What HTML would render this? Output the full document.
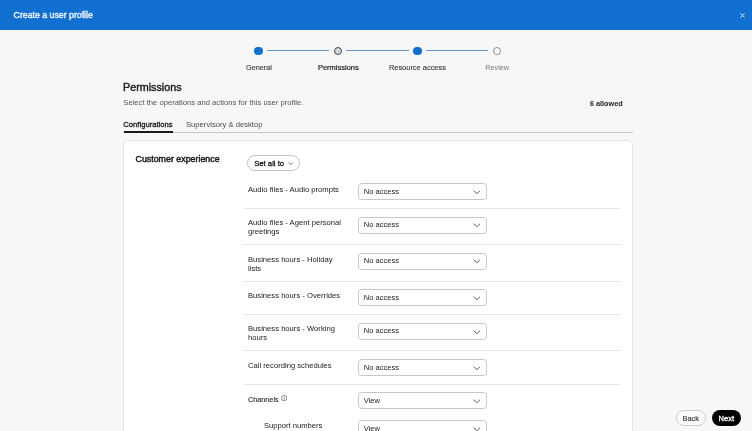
<!DOCTYPE html>
<html><head><meta charset="utf-8"><style>
html,body{margin:0;padding:0;width:752px;height:431px;overflow:hidden;background:#f7f7f7;font-family:"Liberation Sans", sans-serif;}
#root{position:absolute;left:0;top:0;width:752px;height:431px;filter:blur(0.35px);will-change:transform;}
div{font-family:"Liberation Sans", sans-serif;}
</style></head><body><div id="root">
<div style="position:absolute;left:0px;top:0px;width:752px;height:29.6px;background:#1170cf"></div>
<div style="position:absolute;left:13.60px;top:11.26px;font-size:8.75px;line-height:8.75px;font-weight:400;color:#eaf2fc;white-space:nowrap;-webkit-text-stroke:0.4px #eaf2fc">Create a user profile</div>
<svg style="position:absolute;left:740.4px;top:12.5px" width="5" height="5" viewBox="0 0 5 5"><path d="M0.4 0.4L4.6 4.6M4.6 0.4L0.4 4.6" stroke="#e4eefa" stroke-width="1.0" fill="none"/></svg>
<div style="position:absolute;left:267.15px;top:50.2px;width:62.05000000000001px;height:1.3px;background:#6697cc"></div>
<div style="position:absolute;left:346.2px;top:50.2px;width:62.900000000000034px;height:1.3px;background:#6697cc"></div>
<div style="position:absolute;left:426.1px;top:50.2px;width:62.099999999999966px;height:1.3px;background:#6697cc"></div>
<div style="position:absolute;left:254.45px;top:46.65px;width:8.40px;height:8.40px;border-radius:50%;background:#1170cf;box-sizing:border-box;border:none"></div>
<div style="position:absolute;left:333.50px;top:46.65px;width:8.40px;height:8.40px;border-radius:50%;background:#d5d6d9;box-sizing:border-box;border:1.3px solid #414854"></div>
<div style="position:absolute;left:413.40px;top:46.65px;width:8.40px;height:8.40px;border-radius:50%;background:#1170cf;box-sizing:border-box;border:none"></div>
<div style="position:absolute;left:492.50px;top:46.65px;width:8.40px;height:8.40px;border-radius:50%;background:#ffffff;box-sizing:border-box;border:1px solid #8a8a8a"></div>
<div style="position:absolute;left:246.00px;top:63.70px;font-size:7.3px;line-height:7.3px;font-weight:400;color:#333333;white-space:nowrap;-webkit-text-stroke:0.1px #333">General</div>
<div style="position:absolute;left:317.90px;top:63.52px;font-size:7.5px;line-height:7.5px;font-weight:400;color:#222;white-space:nowrap;-webkit-text-stroke:0.2px #222">Permissions</div>
<div style="position:absolute;left:388.90px;top:63.57px;font-size:7.45px;line-height:7.45px;font-weight:400;color:#333333;white-space:nowrap;-webkit-text-stroke:0.1px #333">Resource access</div>
<div style="position:absolute;left:485.20px;top:63.70px;font-size:7.3px;line-height:7.3px;font-weight:400;color:#7a7a7a;white-space:nowrap;">Review</div>
<div style="position:absolute;left:123.00px;top:81.86px;font-size:10.75px;line-height:10.75px;font-weight:400;color:#1a1a1a;white-space:nowrap;-webkit-text-stroke:0.4px #1a1a1a">Permissions</div>
<div style="position:absolute;left:123.30px;top:98.70px;font-size:7.65px;line-height:7.65px;font-weight:400;color:#545454;white-space:nowrap;">Select the operations and actions for this user profile.</div>
<div style="position:absolute;left:590.00px;top:99.54px;font-size:7.25px;line-height:7.25px;font-weight:700;color:#1a1a1a;white-space:nowrap;">6 allowed</div>
<div style="position:absolute;left:123.30px;top:120.50px;font-size:7.65px;line-height:7.65px;font-weight:400;color:#1a1a1a;white-space:nowrap;-webkit-text-stroke:0.3px #1a1a1a">Configurations</div>
<div style="position:absolute;left:186.00px;top:120.60px;font-size:7.65px;line-height:7.65px;font-weight:400;color:#4a4a4a;white-space:nowrap;">Supervisory &amp; desktop</div>
<div style="position:absolute;left:123px;top:132px;width:509.5px;height:0.8px;background:#c8c8c8"></div>
<div style="position:absolute;left:123.5px;top:130.5px;width:49.5px;height:2px;background:#1a1a1a"></div>
<div style="position:absolute;left:123.3px;top:140.3px;width:509.5px;height:400px;background:#fff;border:1px solid #e4e4e4;border-radius:5px;box-sizing:border-box"></div>
<div style="position:absolute;left:135.50px;top:155.28px;font-size:8.85px;line-height:8.85px;font-weight:400;color:#1a1a1a;white-space:nowrap;-webkit-text-stroke:0.45px #1a1a1a">Customer experience</div>
<div style="position:absolute;left:247.3px;top:154.5px;width:52.4px;height:16.9px;border:1px solid #c4c4c4;border-radius:9px;box-sizing:border-box;background:#fff"></div>
<div style="position:absolute;left:254.20px;top:159.66px;font-size:7.7px;line-height:7.7px;font-weight:400;color:#1a1a1a;white-space:nowrap;-webkit-text-stroke:0.3px #1a1a1a">Set all to</div>
<svg style="position:absolute;left:287.8px;top:161.5px" width="5.5" height="3.5" viewBox="0 0 5.5 3.5"><path d="M0.5 0.5L2.75 2.8L5 0.5" stroke="#555" stroke-width="0.8" fill="none"/></svg>
<div style="position:absolute;left:248.00px;top:186.30px;font-size:7.65px;line-height:7.65px;font-weight:400;color:#222222;white-space:nowrap;">Audio files - Audio prompts</div>
<div style="position:absolute;left:357.5px;top:183.2px;width:129.5px;height:17.0px;border:1px solid #c6c6c6;border-radius:3.5px;box-sizing:border-box;background:#fff"></div>
<div style="position:absolute;left:363.80px;top:187.98px;font-size:7.55px;line-height:7.55px;font-weight:400;color:#222222;white-space:nowrap;">No access</div>
<svg style="position:absolute;left:472.6px;top:190.10px" width="7.8" height="4.4" viewBox="0 0 7.8 4.4"><path d="M0.6 0.6L3.9 3.7L7.2 0.6" stroke="#555" stroke-width="0.95" fill="none"/></svg>
<div style="position:absolute;left:244px;top:207.5px;width:376px;height:1px;background:#e6e6e6"></div>
<div style="position:absolute;left:248.00px;top:219.40px;font-size:7.65px;line-height:7.65px;font-weight:400;color:#222222;white-space:nowrap;">Audio files - Agent personal</div>
<div style="position:absolute;left:248.00px;top:228.00px;font-size:7.65px;line-height:7.65px;font-weight:400;color:#222222;white-space:nowrap;">greetings</div>
<div style="position:absolute;left:357.5px;top:216.5px;width:129.5px;height:17.0px;border:1px solid #c6c6c6;border-radius:3.5px;box-sizing:border-box;background:#fff"></div>
<div style="position:absolute;left:363.80px;top:221.28px;font-size:7.55px;line-height:7.55px;font-weight:400;color:#222222;white-space:nowrap;">No access</div>
<svg style="position:absolute;left:472.6px;top:223.40px" width="7.8" height="4.4" viewBox="0 0 7.8 4.4"><path d="M0.6 0.6L3.9 3.7L7.2 0.6" stroke="#555" stroke-width="0.95" fill="none"/></svg>
<div style="position:absolute;left:244px;top:243.5px;width:376px;height:1px;background:#e6e6e6"></div>
<div style="position:absolute;left:248.00px;top:255.90px;font-size:7.65px;line-height:7.65px;font-weight:400;color:#222222;white-space:nowrap;">Business hours - Holiday</div>
<div style="position:absolute;left:248.00px;top:264.50px;font-size:7.65px;line-height:7.65px;font-weight:400;color:#222222;white-space:nowrap;">lists</div>
<div style="position:absolute;left:357.5px;top:252.5px;width:129.5px;height:17.0px;border:1px solid #c6c6c6;border-radius:3.5px;box-sizing:border-box;background:#fff"></div>
<div style="position:absolute;left:363.80px;top:257.28px;font-size:7.55px;line-height:7.55px;font-weight:400;color:#222222;white-space:nowrap;">No access</div>
<svg style="position:absolute;left:472.6px;top:259.40px" width="7.8" height="4.4" viewBox="0 0 7.8 4.4"><path d="M0.6 0.6L3.9 3.7L7.2 0.6" stroke="#555" stroke-width="0.95" fill="none"/></svg>
<div style="position:absolute;left:244px;top:281.0px;width:376px;height:1px;background:#e6e6e6"></div>
<div style="position:absolute;left:248.00px;top:292.10px;font-size:7.65px;line-height:7.65px;font-weight:400;color:#222222;white-space:nowrap;">Business hours - Overrides</div>
<div style="position:absolute;left:357.5px;top:289.09999999999997px;width:129.5px;height:17.0px;border:1px solid #c6c6c6;border-radius:3.5px;box-sizing:border-box;background:#fff"></div>
<div style="position:absolute;left:363.80px;top:293.88px;font-size:7.55px;line-height:7.55px;font-weight:400;color:#222222;white-space:nowrap;">No access</div>
<svg style="position:absolute;left:472.6px;top:296.00px" width="7.8" height="4.4" viewBox="0 0 7.8 4.4"><path d="M0.6 0.6L3.9 3.7L7.2 0.6" stroke="#555" stroke-width="0.95" fill="none"/></svg>
<div style="position:absolute;left:244px;top:314.0px;width:376px;height:1px;background:#e6e6e6"></div>
<div style="position:absolute;left:248.00px;top:325.30px;font-size:7.65px;line-height:7.65px;font-weight:400;color:#222222;white-space:nowrap;">Business hours - Working</div>
<div style="position:absolute;left:248.00px;top:333.90px;font-size:7.65px;line-height:7.65px;font-weight:400;color:#222222;white-space:nowrap;">hours</div>
<div style="position:absolute;left:357.5px;top:322.7px;width:129.5px;height:17.0px;border:1px solid #c6c6c6;border-radius:3.5px;box-sizing:border-box;background:#fff"></div>
<div style="position:absolute;left:363.80px;top:327.48px;font-size:7.55px;line-height:7.55px;font-weight:400;color:#222222;white-space:nowrap;">No access</div>
<svg style="position:absolute;left:472.6px;top:329.60px" width="7.8" height="4.4" viewBox="0 0 7.8 4.4"><path d="M0.6 0.6L3.9 3.7L7.2 0.6" stroke="#555" stroke-width="0.95" fill="none"/></svg>
<div style="position:absolute;left:244px;top:349.5px;width:376px;height:1px;background:#e6e6e6"></div>
<div style="position:absolute;left:248.00px;top:361.60px;font-size:7.65px;line-height:7.65px;font-weight:400;color:#222222;white-space:nowrap;">Call recording schedules</div>
<div style="position:absolute;left:357.5px;top:359.09999999999997px;width:129.5px;height:17.0px;border:1px solid #c6c6c6;border-radius:3.5px;box-sizing:border-box;background:#fff"></div>
<div style="position:absolute;left:363.80px;top:363.88px;font-size:7.55px;line-height:7.55px;font-weight:400;color:#222222;white-space:nowrap;">No access</div>
<svg style="position:absolute;left:472.6px;top:366.00px" width="7.8" height="4.4" viewBox="0 0 7.8 4.4"><path d="M0.6 0.6L3.9 3.7L7.2 0.6" stroke="#555" stroke-width="0.95" fill="none"/></svg>
<div style="position:absolute;left:244px;top:383.8px;width:376px;height:1px;background:#e6e6e6"></div>
<div style="position:absolute;left:248.00px;top:395.54px;font-size:7.25px;line-height:7.25px;font-weight:400;color:#1f1f1f;white-space:nowrap;-webkit-text-stroke:0.1px #1f1f1f">Channels</div>
<svg style="position:absolute;left:281.0px;top:394.7px" width="6.4" height="6.4" viewBox="0 0 6.4 6.4"><circle cx="3.2" cy="3.2" r="2.7" stroke="#555" stroke-width="0.7" fill="none"/><path d="M3.2 2.7V4.7" stroke="#555" stroke-width="0.7"/><circle cx="3.2" cy="1.8" r="0.4" fill="#555"/></svg>
<div style="position:absolute;left:357.5px;top:392.09999999999997px;width:129.5px;height:17.0px;border:1px solid #c6c6c6;border-radius:3.5px;box-sizing:border-box;background:#fff"></div>
<div style="position:absolute;left:363.80px;top:396.88px;font-size:7.55px;line-height:7.55px;font-weight:400;color:#222222;white-space:nowrap;">View</div>
<svg style="position:absolute;left:472.6px;top:399.00px" width="7.8" height="4.4" viewBox="0 0 7.8 4.4"><path d="M0.6 0.6L3.9 3.7L7.2 0.6" stroke="#555" stroke-width="0.95" fill="none"/></svg>
<div style="position:absolute;left:264.00px;top:421.74px;font-size:7.6px;line-height:7.6px;font-weight:400;color:#1a1a1a;white-space:nowrap;">Support numbers</div>
<div style="position:absolute;left:357.5px;top:420.0px;width:129.5px;height:17.0px;border:1px solid #c6c6c6;border-radius:3.5px;box-sizing:border-box;background:#fff"></div>
<div style="position:absolute;left:363.80px;top:424.78px;font-size:7.55px;line-height:7.55px;font-weight:400;color:#222222;white-space:nowrap;">View</div>
<svg style="position:absolute;left:472.6px;top:426.90px" width="7.8" height="4.4" viewBox="0 0 7.8 4.4"><path d="M0.6 0.6L3.9 3.7L7.2 0.6" stroke="#555" stroke-width="0.95" fill="none"/></svg>
<div style="position:absolute;left:676.3px;top:409.8px;width:30px;height:15.8px;border:1px solid #cdcdcd;border-radius:8px;box-sizing:border-box;background:#fbfbfb"></div>
<div style="position:absolute;left:682.60px;top:415.35px;font-size:7.35px;line-height:7.35px;font-weight:400;color:#333333;white-space:nowrap;-webkit-text-stroke:0.15px #333">Back</div>
<div style="position:absolute;left:712px;top:409.8px;width:29.2px;height:15.8px;background:#000;border-radius:8px"></div>
<div style="position:absolute;left:718.60px;top:415.22px;font-size:7.5px;line-height:7.5px;font-weight:400;color:#ffffff;white-space:nowrap;-webkit-text-stroke:0.3px #fff">Next</div>
</div></body></html>
